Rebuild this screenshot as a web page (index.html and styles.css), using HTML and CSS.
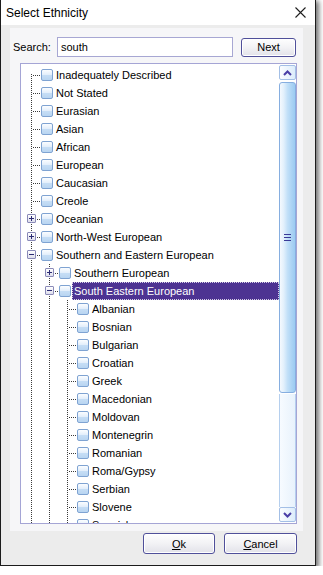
FILE: index.html
```html
<!DOCTYPE html>

<html>

<head>
    <title>Select Ethnicity</title>
    <link rel="stylesheet" href="styles.css">
</head>

<body>
    <div class="window">
        <header class="titlebar">
            <span class="title">Select Ethnicity</span>
            <svg class="close" width="11" height="11" viewBox="0 0 11 11">
                <path d="M0.5 0.5L10.5 10.5M10.5 0.5L0.5 10.5" stroke="#1e1e1e" stroke-width="1.1" fill="none" />
            </svg>
        </header>

        <main class="panel">
            <div class="search">
                <label for="search">Search:</label>
                <input type="text" id="search" value="south">
                <button class="btn next">Next</button>
            </div>

            <div class="tree">
                <div class="list">
                    <!-- top level -->
                    <div class="row"><span class="cell first"></span><span class="check"></span><span class="label">Inadequately Described</span></div>
                    <div class="row"><span class="cell tee"></span><span class="check"></span><span class="label">Not Stated</span></div>
                    <div class="row"><span class="cell tee"></span><span class="check"></span><span class="label">Eurasian</span></div>
                    <div class="row"><span class="cell tee"></span><span class="check"></span><span class="label">Asian</span></div>
                    <div class="row"><span class="cell tee"></span><span class="check"></span><span class="label">African</span></div>
                    <div class="row"><span class="cell tee"></span><span class="check"></span><span class="label">European</span></div>
                    <div class="row"><span class="cell tee"></span><span class="check"></span><span class="label">Caucasian</span></div>
                    <div class="row"><span class="cell tee"></span><span class="check"></span><span class="label">Creole</span></div>
                    <div class="row"><span class="cell tee"><span class="exp plus"></span></span><span class="check"></span><span class="label">Oceanian</span></div>
                    <div class="row"><span class="cell tee"><span class="exp plus"></span></span><span class="check"></span><span class="label">North-West European</span></div>
                    <div class="row"><span class="cell tee"><span class="exp"></span></span><span class="check"></span><span class="label">Southern and Eastern European</span></div>

                    <!-- second level -->
                    <div class="row"><span class="cell pipe"></span><span class="cell tee"><span class="exp plus"></span></span><span class="check"></span><span class="label">Southern European</span></div>
                    <div class="row"><span class="cell pipe"></span><span class="cell tee"><span class="exp"></span></span><span class="check"></span><span class="label selected">South Eastern European</span></div>

                    <!-- third level -->
                    <div class="row"><span class="cell pipe"></span><span class="cell pipe"></span><span class="cell tee"></span><span class="check"></span><span class="label">Albanian</span></div>
                    <div class="row"><span class="cell pipe"></span><span class="cell pipe"></span><span class="cell tee"></span><span class="check"></span><span class="label">Bosnian</span></div>
                    <div class="row"><span class="cell pipe"></span><span class="cell pipe"></span><span class="cell tee"></span><span class="check"></span><span class="label">Bulgarian</span></div>
                    <div class="row"><span class="cell pipe"></span><span class="cell pipe"></span><span class="cell tee"></span><span class="check"></span><span class="label">Croatian</span></div>
                    <div class="row"><span class="cell pipe"></span><span class="cell pipe"></span><span class="cell tee"></span><span class="check"></span><span class="label">Greek</span></div>
                    <div class="row"><span class="cell pipe"></span><span class="cell pipe"></span><span class="cell tee"></span><span class="check"></span><span class="label">Macedonian</span></div>
                    <div class="row"><span class="cell pipe"></span><span class="cell pipe"></span><span class="cell tee"></span><span class="check"></span><span class="label">Moldovan</span></div>
                    <div class="row"><span class="cell pipe"></span><span class="cell pipe"></span><span class="cell tee"></span><span class="check"></span><span class="label">Montenegrin</span></div>
                    <div class="row"><span class="cell pipe"></span><span class="cell pipe"></span><span class="cell tee"></span><span class="check"></span><span class="label">Romanian</span></div>
                    <div class="row"><span class="cell pipe"></span><span class="cell pipe"></span><span class="cell tee"></span><span class="check"></span><span class="label">Roma/Gypsy</span></div>
                    <div class="row"><span class="cell pipe"></span><span class="cell pipe"></span><span class="cell tee"></span><span class="check"></span><span class="label">Serbian</span></div>
                    <div class="row"><span class="cell pipe"></span><span class="cell pipe"></span><span class="cell tee"></span><span class="check"></span><span class="label">Slovene</span></div>
                    <div class="row"><span class="cell pipe"></span><span class="cell pipe"></span><span class="cell tee"></span><span class="check"></span><span class="label">Spanish</span></div>
                </div>

                <div class="scrollbar">
                    <div class="sb-btn">
                        <svg width="9" height="6" viewBox="0 0 9 6"><path d="M1 5L4.5 1.5L8 5" stroke="#4a3ea6" stroke-width="2" fill="none" /></svg>
                    </div>
                    <div class="thumb"><span class="grip"></span></div>
                    <div class="track"></div>
                    <div class="sb-btn">
                        <svg width="9" height="6" viewBox="0 0 9 6"><path d="M1 1L4.5 4.5L8 1" stroke="#4a3ea6" stroke-width="2" fill="none" /></svg>
                    </div>
                </div>
            </div>
        </main>

        <footer class="footer">
            <button class="btn ok"><u>O</u>k</button>
            <button class="btn cancel"><u>C</u>ancel</button>
        </footer>
    </div>
</body>

</html>
```

FILE: styles.css
```css
body {
    margin: 0;
    background-color: #ffffff;
    font-family: 'Liberation Sans', Arial, sans-serif;
    font-size: 11px;
    color: #000000;
}

.window {
    width: 316px;
    height: 566px;
    box-sizing: border-box;
    border: 1px solid #1c1c1c;
    border-top: none;
    background-color: #ececec;
    box-shadow: 2px 2px 5px 1px rgba(0, 0, 0, 0.55);
    display: flex;
    flex-direction: column;
}

.titlebar {
    height: 25px;
    flex: none;
    background-color: #ffffff;
    display: flex;
    align-items: center;
    justify-content: space-between;
    padding: 0 9px 0 5px;
}

.title {
    font-size: 12px;
}

.panel {
    width: 293px;
    height: 503px;
    margin: 3px 0 0 9px;
    padding: 9px 0 0 3px;
    box-sizing: border-box;
    background-color: #f6f6f8;
    flex: none;
}

.search {
    display: flex;
    align-items: center;
    height: 20px;
}

.search label {
    width: 44px;
}

.search input {
    width: 176px;
    height: 20px;
    box-sizing: border-box;
    border: 1px solid #a7a7d3;
    padding: 0 3px;
    margin: 0;
    font-family: inherit;
    font-size: 11px;
    outline: none;
}

.btn {
    height: 21px;
    box-sizing: border-box;
    border: 1px solid #50509a;
    border-radius: 3px;
    background: linear-gradient(#fefefe, #f2f2f5 50%, #e2e2e9);
    box-shadow: inset 0 0 0 1px #ffffff;
    font-family: inherit;
    font-size: 11px;
    color: #000000;
    padding: 0;
    margin: 0;
}

.next {
    width: 55px;
    height: 19px;
    margin-left: 8px;
}

/* tree view */

.tree {
    width: 277px;
    height: 461px;
    margin: 6px 0 0 7px;
    box-sizing: border-box;
    border: 1px solid #a5a5d5;
    background-color: #ffffff;
    display: flex;
    overflow: hidden;
}

.list {
    flex: 1;
    padding-top: 2px;
    overflow: hidden;
}

.row {
    display: flex;
    align-items: center;
    height: 18px;
}

.cell {
    width: 18px;
    height: 18px;
    flex: none;
    position: relative;
}

.cell::before {
    content: '';
    position: absolute;
    left: 10px;
    top: 0;
    width: 1px;
    height: 18px;
    background: repeating-linear-gradient(#3a3a3a 0 1px, transparent 1px 2px);
}

.first::before {
    top: 8px;
    height: 10px;
}

.first::after,
.tee::after {
    content: '';
    position: absolute;
    left: 11px;
    top: 9px;
    width: 9px;
    height: 1px;
    background: repeating-linear-gradient(to right, transparent 0 1px, #3a3a3a 1px 2px);
}

.exp {
    position: absolute;
    left: 6px;
    top: 4px;
    width: 9px;
    height: 9px;
    box-sizing: border-box;
    border: 1px solid #8a8ab8;
    border-radius: 1px;
    background: linear-gradient(#ffffff, #dedeec);
    z-index: 1;
}

.exp::before {
    content: '';
    position: absolute;
    left: 1px;
    top: 3px;
    width: 5px;
    height: 1px;
    background-color: #2b2b73;
}

.exp.plus::after {
    content: '';
    position: absolute;
    left: 3px;
    top: 1px;
    width: 1px;
    height: 5px;
    background-color: #2b2b73;
}

.check {
    width: 12px;
    height: 12px;
    flex: none;
    margin-left: 2px;
    box-sizing: border-box;
    border: 1px solid #7fa3d2;
    border-radius: 2px;
    background: linear-gradient(#fbfdff, #e4effb 45%, #c5ddf5 55%, #b9d5f1);
}

.label {
    flex: 1;
    height: 18px;
    line-height: 16px;
    box-sizing: border-box;
    margin-left: 1px;
    padding-left: 1px;
    border: 1px solid transparent;
    white-space: nowrap;
}

.label.selected {
    background-color: #4d3392;
    color: #ffffff;
    border: 1px dotted #d6cfe6;
}

/* scrollbar */

.scrollbar {
    width: 17px;
    flex: none;
    display: flex;
    flex-direction: column;
    padding: 1px 0;
    box-sizing: border-box;
}

.sb-btn {
    height: 15px;
    flex: none;
    box-sizing: border-box;
    border: 1px solid #a3bfe6;
    border-radius: 2px;
    background: linear-gradient(to right, #fbfdff, #dcecfb);
    display: flex;
    align-items: center;
    justify-content: center;
}

.thumb {
    height: 311px;
    flex: none;
    margin-top: 2px;
    box-sizing: border-box;
    border: 1px solid #86aee0;
    border-radius: 3px;
    background: linear-gradient(to right, #f4f9fe 0%, #e2f0fc 25%, #c2e0f8 50%, #a9d2f4 80%, #9ccbf2 100%);
    display: flex;
    align-items: center;
    justify-content: center;
}

.grip {
    width: 7px;
    height: 7px;
    background: repeating-linear-gradient(#3a3a98 0 1px, transparent 1px 3px);
}

.track {
    flex: 1;
    margin-top: 1px;
    border-left: 1px solid #b5cfee;
    border-right: 1px solid #b5cfee;
    background: linear-gradient(to right, #f7fbff, #e8f2fc);
}

/* buttons */

.footer {
    display: flex;
    justify-content: flex-end;
    gap: 9px;
    padding: 2px 18px 0 0;
}

.ok {
    width: 72px;
}

.cancel {
    width: 73px;
}
```
